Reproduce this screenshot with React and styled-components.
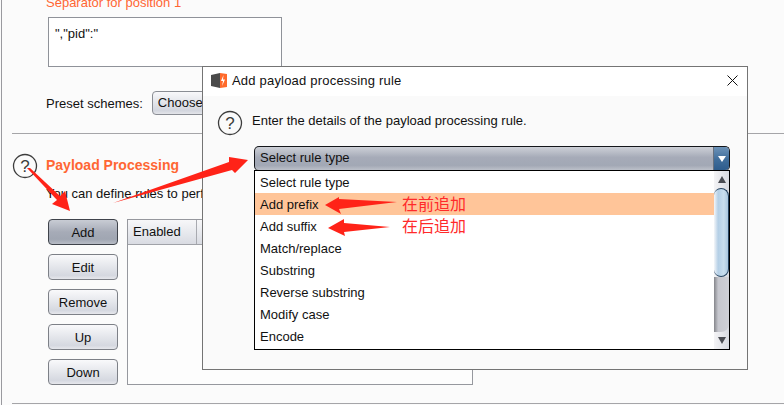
import React from 'react';
import styled, { createGlobalStyle } from 'styled-components';

const GlobalStyle = createGlobalStyle`
  html, body {
    margin: 0;
    padding: 0;
    background: #fbfbfb;
    overflow: hidden;
  }
  * { box-sizing: border-box; }
`;

const Page = styled.div`
  position: relative;
  width: 784px;
  height: 405px;
  overflow: hidden;
  background: #fbfbfb;
  font-family: 'Liberation Sans', Arial, sans-serif;
  font-size: 13px;
  color: #111;
  padding-left: 12px;
  &::before {
    content: '';
    position: absolute;
    left: 1px;
    top: 0;
    bottom: 0;
    width: 1px;
    background: #9a9a9f;
  }
`;

const TopPart = styled.div`
  display: flow-root;
  padding-left: 34px;
  height: 133px;
`;

const SeparatorLabel = styled.div`
  color: #ff6633;
  line-height: 15px;
  height: 17px;
  margin-top: -5px;
  margin-bottom: 5px;
  white-space: nowrap;
`;

const SeparatorBox = styled.div`
  margin-left: 2px;
  width: 234px;
  height: 50px;
  background: #fff;
  border: 1px solid #8f9299;
  padding: 8px 6px;
  line-height: 15px;
`;

const PresetRow = styled.div`
  display: flex;
  align-items: center;
  gap: 9px;
  margin-top: 24px;
  white-space: nowrap;
`;

const PresetSelect = styled.div`
  width: 130px;
  height: 24px;
  border: 1px solid #8a8d94;
  border-radius: 4px;
  padding: 0 5px;
  line-height: 22px;
  background: linear-gradient(#f8f8fa, #e2e4ea 50%, #d3d6de 85%, #e4e5ea);
`;

const Divider = styled.hr`
  margin: 0;
  border: 0;
  height: 1px;
  background: #a5a5a8;
`;

const Section = styled.section`
  display: flex;
  height: 269px;
  padding-top: 19px;
`;

const HelpSlot = styled.div`
  width: 34px;
  flex: none;
`;

const SectionBody = styled.div`
  flex: 1;
  min-width: 0;
`;

const Title = styled.h2`
  margin: 4px 0 0;
  font-size: 14px;
  line-height: 16px;
  font-weight: bold;
  color: #ff6633;
`;

const Description = styled.p`
  margin: 13px 0 0;
  line-height: 16px;
  white-space: nowrap;
`;

const RuleArea = styled.div`
  display: flex;
  gap: 9px;
  margin: 17px 0 0 2px;
`;

const ButtonColumn = styled.div`
  display: flex;
  flex-direction: column;
  gap: 9px;
`;

const SideButton = styled.button`
  width: 70px;
  height: 26px;
  padding: 0;
  border-radius: 4px;
  font: inherit;
  color: #111;
  border: 1px solid ${(p) => (p.$pressed ? '#3f434b' : '#7d8087')};
  background: ${(p) =>
    p.$pressed
      ? 'linear-gradient(#c8ccd4, #a6abb7 50%, #a0a6b2 80%, #b8bcc6)'
      : 'linear-gradient(#f9f9fb, #e4e6eb 50%, #d5d8e0 85%, #e6e7ec)'};
`;

const RuleTable = styled.div`
  width: 346px;
  height: 166px;
  background: #fdfdfd;
  border: 1px solid #96989e;
`;

const TableHead = styled.div`
  display: flex;
  height: 25px;
  border-bottom: 1px solid #a0a2a8;
  background: linear-gradient(#f7f7f9, #e5e7ec 60%, #d9dbe2);
`;

const HeadCell = styled.div`
  width: ${(p) => p.$w}px;
  padding-left: 5px;
  line-height: 23px;
  border-right: 1px solid #a8aab0;
`;

const Dialog = styled.div`
  position: absolute;
  left: 202px;
  top: 66px;
  width: 546px;
  height: 304px;
  background: #fafafa;
  border: 1px solid #747474;
`;

const DialogTitle = styled.div`
  display: flex;
  align-items: center;
  gap: 5px;
  height: 29px;
  padding: 0 9px 2px 8px;
  background: #fff;
`;

const DialogTitleText = styled.div`
  flex: 1;
  line-height: 16px;
  letter-spacing: 0.2px;
`;

const CloseIcon = styled.svg`
  display: block;
  width: 11px;
  height: 11px;
`;

const DialogBody = styled.div`
  padding: 14px 17px 0 14px;
`;

const Prompt = styled.div`
  display: flex;
  align-items: flex-start;
  gap: 9px;
  height: 36px;
`;

const PromptText = styled.div`
  margin-top: 2px;
  line-height: 18px;
`;

const Combo = styled.div`
  display: flex;
  margin-left: 37px;
  height: 25px;
  border: 1px solid #14161a;
  border-bottom-color: #555;
  border-radius: 5px;
  overflow: hidden;
  background: linear-gradient(#cdd0d7, #a6abb8 45%, #a2a8b5 80%, #bcc0c9);
`;

const ComboText = styled.div`
  flex: 1;
  padding-left: 5px;
  line-height: 22px;
`;

const ComboArrow = styled.div`
  display: flex;
  align-items: center;
  justify-content: center;
  width: 16px;
  background: linear-gradient(#6d93b8, #3f6d9b 55%, #2e5c8c);
  border-left: 1px solid #68717f;
  &::after {
    content: '';
    border-left: 4px solid transparent;
    border-right: 4px solid transparent;
    border-top: 6px solid #fff;
  }
`;

const List = styled.div`
  display: flex;
  margin: -1px 0 0 37px;
  height: 180px;
  background: #fff;
  border: 1px solid #000;
`;

const Options = styled.div`
  flex: 1;
  overflow: hidden;
`;

const Option = styled.div`
  height: 22px;
  padding: 1px 0 0 5px;
  line-height: 21px;
  background: ${(p) => (p.$active ? '#ffc599' : 'transparent')};
`;

const Scrollbar = styled.div`
  display: flex;
  flex-direction: column;
  width: 15px;
  flex: none;
  background: linear-gradient(90deg, #f4f4f6, #d8dae0);
`;

const ScrollStep = styled.div`
  display: flex;
  align-items: center;
  justify-content: center;
  height: 17px;
  flex: none;
  &::after {
    content: '';
    border-left: 4px solid transparent;
    border-right: 4px solid transparent;
    ${(p) => (p.$up ? 'border-bottom' : 'border-top')}: 7px solid #4a4c52;
  }
`;

const ScrollThumb = styled.div`
  height: 89px;
  flex: none;
  border: 1px solid #24425f;
  border-left: 0;
  border-radius: 8px 9px 9px 8px;
  background: linear-gradient(90deg, #f4f6f9, #b4cfe6 30%, #c9dfef 70%, #a9c6de);
`;

const ScrollTrack = styled.div`
  flex: 1;
  border-radius: 0 0 8px 0;
  background: linear-gradient(90deg, #85868b, #c6c7ce 28%, #cfd0d6);
`;

const Overlay = styled.svg`
  position: absolute;
  left: 0;
  top: 0;
  width: 784px;
  height: 405px;
  pointer-events: none;
`;

const Note = styled.div`
  position: absolute;
  left: 402px;
  top: ${(p) => p.$top}px;
  font-family: 'Noto Sans CJK SC', sans-serif;
  font-size: 16px;
  line-height: 20px;
  color: #ff2a2a;
  white-space: nowrap;
`;

function HelpIcon() {
  return (
    <svg width="26" height="26" viewBox="0 0 26 26">
      <circle cx="13" cy="13" r="11.5" fill="none" stroke="#3c3c3c" strokeWidth="1.3" />
      <text x="13" y="19" textAnchor="middle" fontFamily="Liberation Sans, sans-serif" fontSize="17" fill="#3c3c3c">?</text>
    </svg>
  );
}

function BurpLogo() {
  return (
    <svg width="16" height="15" viewBox="0 0 16 15">
      <path d="M0 2 L9 0 V15 L0 13 Z" fill="#4a4a4a" />
      <path d="M9 0 L16 1 V14 L9 15 Z" fill="#ff6a2b" />
      <path d="M12.5 2 L10 8 H12 L11 13 L14 6.5 H12 Z" fill="#fff" />
    </svg>
  );
}

const ruleTypes = ['Select rule type', 'Add prefix', 'Add suffix', 'Match/replace', 'Substring', 'Reverse substring', 'Modify case', 'Encode'];
const sideButtons = ['Add', 'Edit', 'Remove', 'Up', 'Down'];

export default function App() {
  return (
    <Page>
      <GlobalStyle />
      <TopPart>
        <SeparatorLabel>Separator for position 1</SeparatorLabel>
        <SeparatorBox>","pid":"</SeparatorBox>
        <PresetRow>
          Preset schemes:
          <PresetSelect>Choose...</PresetSelect>
        </PresetRow>
      </TopPart>
      <Divider />
      <Section>
        <HelpSlot><HelpIcon /></HelpSlot>
        <SectionBody>
          <Title>Payload Processing</Title>
          <Description>You can define rules to perform various processing tasks on each payload before it is used.</Description>
          <RuleArea>
            <ButtonColumn>
              {sideButtons.map((b) => (
                <SideButton key={b} $pressed={b === 'Add'}>{b}</SideButton>
              ))}
            </ButtonColumn>
            <RuleTable>
              <TableHead>
                <HeadCell $w={69}>Enabled</HeadCell>
                <HeadCell $w={275}>Rule</HeadCell>
              </TableHead>
            </RuleTable>
          </RuleArea>
        </SectionBody>
      </Section>
      <Divider />

      <Dialog>
        <DialogTitle>
          <BurpLogo />
          <DialogTitleText>Add payload processing rule</DialogTitleText>
          <CloseIcon viewBox="0 0 11 11">
            <path d="M0.5 0.5 L10.5 10.5 M10.5 0.5 L0.5 10.5" stroke="#111" strokeWidth="1" fill="none" />
          </CloseIcon>
        </DialogTitle>
        <DialogBody>
          <Prompt>
            <HelpIcon />
            <PromptText>Enter the details of the payload processing rule.</PromptText>
          </Prompt>
          <Combo>
            <ComboText>Select rule type</ComboText>
            <ComboArrow />
          </Combo>
          <List>
            <Options>
              {ruleTypes.map((r) => (
                <Option key={r} $active={r === 'Add prefix'}>{r}</Option>
              ))}
            </Options>
            <Scrollbar>
              <ScrollStep $up />
              <ScrollThumb />
              <ScrollTrack />
              <ScrollStep />
            </Scrollbar>
          </List>
        </DialogBody>
      </Dialog>

      <Overlay viewBox="0 0 784 405">
        <g fill="#ff2318">
          <polygon points="27,168 30,168 60,196 65,191 70,211 52,204 57,200" />
          <polygon points="113,203 229,162 229,157 248,160 235,173 232,170" />
          <polygon points="397,202 339,199 339,197 325,205 341,214 339,209" />
          <polygon points="390,227 344,223 344,219 328,228 345,236 344,232" />
        </g>
      </Overlay>
      <Note $top={193}>在前追加</Note>
      <Note $top={215}>在后追加</Note>
    </Page>
  );
}
